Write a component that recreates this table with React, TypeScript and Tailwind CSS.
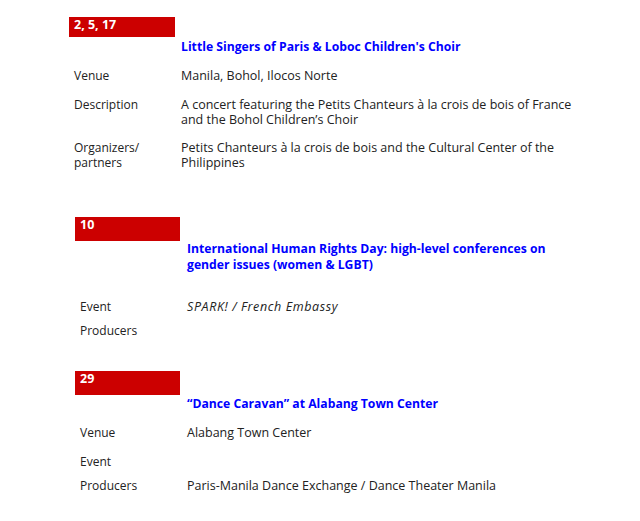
import React from "react";

const font = { fontFamily: '"Open Sans", "Liberation Sans", sans-serif' };

function Row({ label, children, className = "" }: { label: React.ReactNode; children?: React.ReactNode; className?: string }) {
  return (
    <div className={"flex text-[12.5px] leading-[15px] text-[#222] " + className}>
      <div className="w-[112px] shrink-0 pl-[5px] text-[12px]">{label}</div>
      <div className="w-[400px]">{children}</div>
    </div>
  );
}

function DateBox({ children, h }: { children: React.ReactNode; h: string }) {
  return (
    <div className={"w-[105px] bg-[#cc0000] text-white font-bold text-[12.5px] leading-[16px] pl-[5px] " + h}>
      {children}
    </div>
  );
}

export default function App() {
  return (
    <div className="w-[640px] h-[521px] bg-white overflow-hidden" style={font}>
      {/* Block 1 */}
      <div className="ml-[69px] pt-[17px] w-[540px]">
        <DateBox h="h-[20px] w-[106px]">2, 5, 17</DateBox>
        <div className="ml-[112px] mt-[2px] text-[12.2px] leading-[15px] font-bold text-[#0000ff]">
          Little Singers of Paris &amp; Loboc Children's Choir
        </div>
        <Row label="Venue" className="mt-[14px]">Manila, Bohol, Ilocos Norte</Row>
        <Row label="Description" className="mt-[14px]">
          A concert featuring the Petits Chanteurs à la crois de bois of France and the Bohol Children’s Choir
        </Row>
        <Row label={<>Organizers/<br />partners</>} className="mt-[13px]">
          Petits Chanteurs à la crois de bois and the Cultural Center of the Philippines
        </Row>
      </div>

      {/* Block 2 */}
      <div className="ml-[75px] mt-[47px] w-[540px]">
        <DateBox h="h-[24px]">10</DateBox>
        <div className="ml-[112px] w-[375px] text-[12.2px] leading-[16px] font-bold text-[#0000ff]">
          International Human Rights Day: high-level conferences on gender issues (women &amp; LGBT)
        </div>
        <Row label="Event" className="mt-[26px]"><span className="italic tracking-[0.6px]">SPARK! / French Embassy</span></Row>
        <Row label="Producers" className="mt-[9px]"></Row>
      </div>

      {/* Block 3 */}
      <div className="ml-[75px] mt-[33px] w-[540px]">
        <DateBox h="h-[24px]">29</DateBox>
        <div className="ml-[112px] mt-[1px] text-[12.2px] leading-[16px] font-bold text-[#0000ff]">
          “Dance Caravan” at Alabang Town Center
        </div>
        <Row label="Venue" className="mt-[13px]">Alabang Town Center</Row>
        <Row label="Event" className="mt-[14px]"></Row>
        <Row label="Producers" className="mt-[9px]">Paris-Manila Dance Exchange / Dance Theater Manila</Row>
      </div>
    </div>
  );
}
